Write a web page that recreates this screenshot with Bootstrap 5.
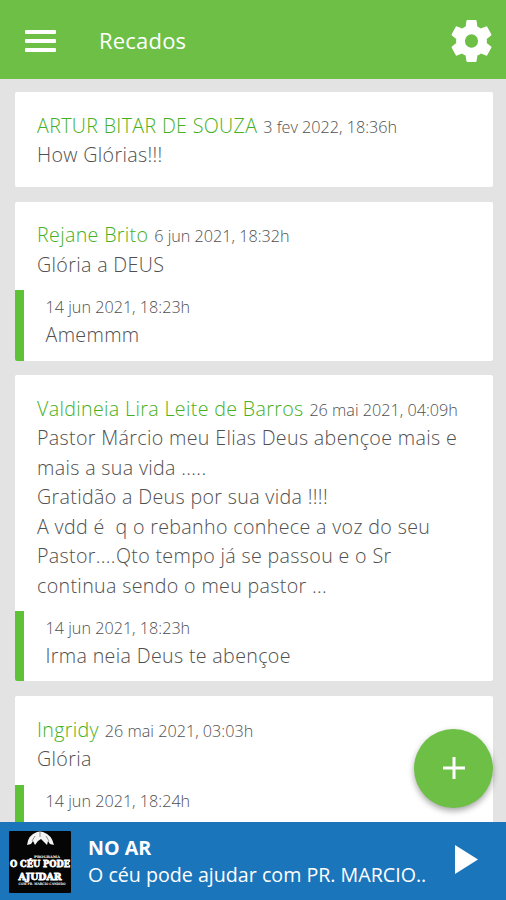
<!DOCTYPE html>
<html lang="pt-BR">
<head>
<meta charset="utf-8">
<meta name="viewport" content="width=device-width, initial-scale=1">
<title>Recados</title>
<link href="https://cdn.jsdelivr.net/npm/bootstrap@5.3.0/dist/css/bootstrap.min.css" rel="stylesheet">
<style>
:root{--leaf:#6dbf46}
body{font-family:"Open Sans","Noto Sans",sans-serif;background:#e3e3e3;color:#666}
.screen{height:900px;width:506px}
.topbar{height:79px;background:var(--leaf);padding:3px 14px 0 25px}
.topbar h1{font-size:22px;margin:-2px 0 0 43px;letter-spacing:.2px}
.feed{padding:13.2px 13px 0 14.5px;gap:14.4px}
.recado{font-size:19.65px;line-height:29.5px;font-weight:300;border-radius:2px;color:#505050;letter-spacing:.34px}
.recado-main{padding:18.8px 20px 10.9px 22.5px}
.recado-main.solo{padding-bottom:17.2px}
.headline{height:29.5px}
.author{color:#47b022}
.stamp{font-size:16.2px;color:#505050;letter-spacing:0}
.headline .stamp{line-height:1;margin-left:.4px}
.reply{border-left:9px solid #5fc136;height:70.3px;padding:2.6px 22px 0;line-height:28.5px}
.recado p{white-space:pre-line}
.fab{right:13px;top:729px;width:79px;height:79px;background:var(--leaf);box-shadow:0 3px 6px rgba(0,0,0,.35);z-index:2}
.fab svg{margin-top:-2px}
.player{height:78px;background:#1b75bb;padding:0 28px 0 9px;z-index:1}
.cover{width:62px;height:62px;margin-top:1px}
.on-air{margin-left:17px;font-size:19.65px;line-height:27px}
.play{margin-top:-3px}
</style>
</head>
<body>
<div class="screen position-relative d-flex flex-column overflow-hidden">
  <header class="topbar d-flex align-items-center text-white flex-shrink-0">
    <svg width="31" height="22" viewBox="0 0 31 22" fill="#fff"><rect width="31" height="4" rx="1"/><rect y="9" width="31" height="4" rx="1"/><rect y="18" width="31" height="4" rx="1"/></svg>
    <h1 class="fw-normal">Recados</h1>
    <svg class="ms-auto" width="41" height="42" viewBox="2 2 20 20" preserveAspectRatio="none" fill="#fff"><path d="M19.43 12.98c.04-.32.07-.64.07-.98s-.03-.66-.07-.98l2.11-1.65c.19-.15.24-.42.12-.64l-2-3.46c-.12-.22-.39-.3-.61-.22l-2.49 1c-.52-.4-1.08-.73-1.69-.98l-.38-2.65C14.46 2.18 14.25 2 14 2h-4c-.25 0-.46.18-.49.42l-.38 2.65c-.61.25-1.17.59-1.69.98l-2.49-1c-.23-.09-.49 0-.61.22l-2 3.46c-.13.22-.07.49.12.64l2.11 1.65c-.04.32-.07.65-.07.98s.03.66.07.98l-2.11 1.65c-.19.15-.24.42-.12.64l2 3.46c.12.22.39.3.61.22l2.49-1c.52.4 1.08.73 1.69.98l.38 2.65c.03.24.24.42.49.42h4c.25 0 .46-.18.49-.42l.38-2.65c.61-.25 1.17-.59 1.69-.98l2.49 1c.23.09.49 0 .61-.22l2-3.46c.12-.22.07-.49-.12-.64l-2.11-1.65zM12 15.2a3.2 3.2 0 1 1 0-6.4 3.2 3.2 0 0 1 0 6.4z"/></svg>
  </header>
  <main class="feed d-flex flex-column flex-grow-1 overflow-hidden">
    <article class="recado bg-white flex-shrink-0 overflow-hidden">
      <div class="recado-main solo">
        <div class="headline"><span class="author">ARTUR BITAR DE SOUZA</span> <span class="stamp">3 fev 2022, 18:36h</span></div>
        <p class="mb-0">How Glórias!!!</p>
      </div>
    </article>
    <article class="recado bg-white flex-shrink-0 overflow-hidden">
      <div class="recado-main">
        <div class="headline"><span class="author">Rejane Brito</span> <span class="stamp">6 jun 2021, 18:32h</span></div>
        <p class="mb-0">Glória a DEUS</p>
      </div>
      <div class="reply"><div class="stamp">14 jun 2021, 18:23h</div><div>Amemmm</div></div>
    </article>
    <article class="recado bg-white flex-shrink-0 overflow-hidden">
      <div class="recado-main">
        <div class="headline"><span class="author">Valdineia Lira Leite de Barros</span> <span class="stamp">26 mai 2021, 04:09h</span></div>
        <p class="mb-0">Pastor Márcio meu Elias Deus abençoe mais e
mais a sua vida .....
Gratidão a Deus por sua vida !!!!
A vdd é &nbsp;q o rebanho conhece a voz do seu
Pastor....Qto tempo já se passou e o Sr
continua sendo o meu pastor ...</p>
      </div>
      <div class="reply"><div class="stamp">14 jun 2021, 18:23h</div><div>Irma neia Deus te abençoe</div></div>
    </article>
    <article class="recado bg-white flex-shrink-0 overflow-hidden">
      <div class="recado-main">
        <div class="headline"><span class="author">Ingridy</span> <span class="stamp">26 mai 2021, 03:03h</span></div>
        <p class="mb-0">Glória</p>
      </div>
      <div class="reply"><div class="stamp">14 jun 2021, 18:24h</div><div>Glória a Deus</div></div>
    </article>
  </main>
  <button class="fab btn rounded-circle border-0 p-0 position-absolute d-flex align-items-center justify-content-center" type="button" aria-label="Novo recado">
    <svg width="22" height="22" viewBox="0 0 22 22" stroke="#fff" stroke-width="3"><path d="M11 0v22M0 11h22"/></svg>
  </button>
  <footer class="player d-flex align-items-center text-white flex-shrink-0">
    <svg class="cover" viewBox="0 0 62 62"><rect width="62" height="62" rx="1" fill="#050505"/>
      <path d="M18 14Q19 4 28 1l3-.5 3 .5Q43 4 45 14l-4-1-2-3-1 4-4-4-2-2-3 2-3 4-2-4-2 3z" fill="#f4f4f4"/>
      <path d="M23 10l3-5M40 10l-3-5M31 1v5" stroke="#777" stroke-width=".8"/>
      <g fill="#fff" text-anchor="middle" font-family="DejaVu Serif,serif" font-weight="700">
        <text x="38" y="26.500" font-size="3.500" textLength="26" lengthAdjust="spacingAndGlyphs">PROGRAMA</text>
        <text x="31" y="36" font-size="9.500" textLength="60" lengthAdjust="spacingAndGlyphs" stroke="#fff" stroke-width=".8">O CÉU PODE</text>
        <text x="31" y="49" font-size="9.500" textLength="43" lengthAdjust="spacingAndGlyphs" stroke="#fff" stroke-width=".8">AJUDAR</text>
        <text x="33" y="53.500" font-size="3.300" textLength="47" lengthAdjust="spacingAndGlyphs">COM PR. MARCIO CANDIDO</text>
      </g></svg>
    <div class="on-air"><div class="fw-bold">NO AR</div><div>O céu pode ajudar com PR. MARCIO..</div></div>
    <svg class="play ms-auto" width="23" height="29" viewBox="0 0 23 29" fill="#fff"><path d="M0 0l23 14.500L0 29z"/></svg>
  </footer>
</div>
<script src="https://cdn.jsdelivr.net/npm/bootstrap@5.3.0/dist/js/bootstrap.bundle.min.js"></script>
</body>
</html>
